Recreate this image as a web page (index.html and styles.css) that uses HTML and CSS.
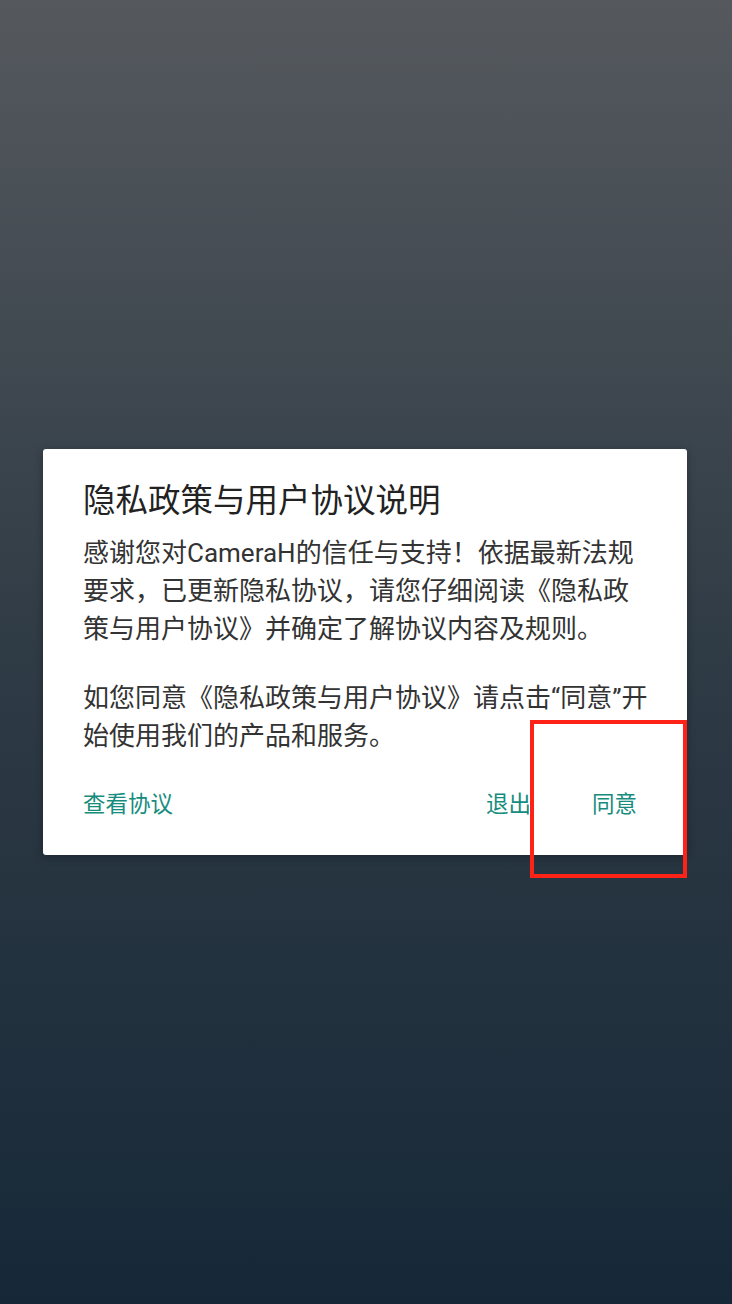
FILE: index.html
```html
<html>
<head>
<title>隐私政策与用户协议说明</title>
<meta name="viewport" content="width=device-width">
<link rel="stylesheet" href="styles.css">
</head>
<body>

<div class="dialog">
<h1 class="title">隐私政策与用户协议说明</h1>
<p class="msg">感谢您对CameraH的信任与支持！依据最新法规<br>要求，已更新隐私协议，请您仔细阅读《隐私政<br>策与用户协议》并确定了解协议内容及规则。</p>
<p class="msg second">如您同意《隐私政策与用户协议》请点击<span class="q">“</span>同意<span class="q">”</span>开<br>始使用我们的产品和服务。</p>
<div class="buttons">
<a class="btn">查看协议</a>
<span class="spacer"></span>
<a class="btn">退出</a>
<a class="btn agree">同意</a>
</div>
</div>

<div class="mark"></div>

</body>
</html>
```

FILE: styles.css
```css
* {
  box-sizing: border-box;
}

body {
  margin: 0;
  height: 1304px;
  padding-top: 449px;
  background: linear-gradient(to bottom, #55595e 0%, #2f3b45 50%, #162838 100%);
  font-family: Roboto, "Noto Sans CJK SC", sans-serif;
  position: relative;
  overflow: hidden;
}

.dialog {
  margin-left: 43px;
  width: 644px;
  height: 406px;
  background: #fff;
  border-radius: 3px;
  padding: 30px 20px 0 40px;
  box-shadow: 0 2px 8px rgba(0,0,0,0.3);
}

.title {
  margin: 0;
  font-size: 32.5px;
  line-height: 44px;
  font-weight: normal;
  color: #222;
  white-space: nowrap;
}

.msg {
  margin: 11px 0 0 0;
  font-size: 26px;
  line-height: 38px;
  color: #333;
  white-space: nowrap;
}

.msg.second {
  margin-top: 31px;
}

.q {
  font-family: Roboto, sans-serif;
}

.buttons {
  display: flex;
  align-items: center;
  margin-top: 34px;
  font-size: 22.5px;
  line-height: 30px;
}

.btn {
  color: #168c7e;
}

.spacer {
  flex: 1;
}

.agree {
  margin-left: 61px;
  margin-right: 30px;
}

.mark {
  position: absolute;
  left: 530px;
  top: 720px;
  width: 157px;
  height: 158px;
  border: 4px solid #ff2216;
}
```
